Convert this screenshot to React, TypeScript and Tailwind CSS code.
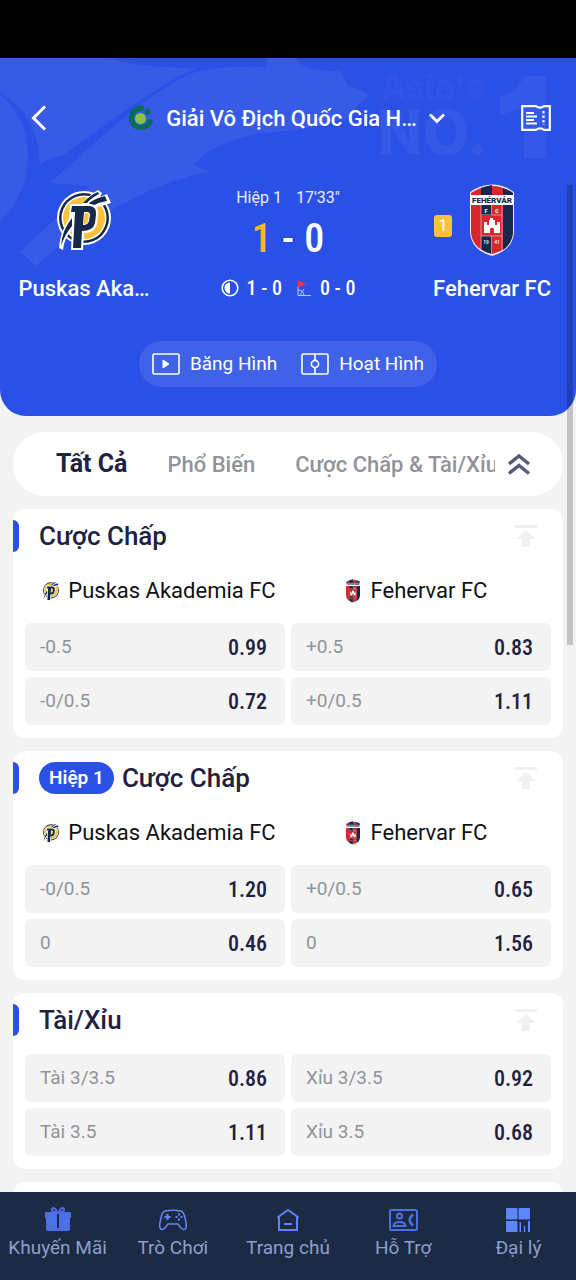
import React from "react";

const NUM = "font-['Roboto_Condensed','Liberation_Sans_Narrow',sans-serif]";

function PuskasLogo({ className }: { className: string }) {
  return (
    <svg viewBox="0 0 56 60" className={className} aria-hidden="true">
      <circle cx="28" cy="28" r="27" fill="#fff" />
      <circle cx="28" cy="28" r="25" fill="#16294b" />
      <circle cx="28" cy="28" r="22.500" fill="#fff" />
      <circle cx="28" cy="28" r="21" fill="#fdc13c" />
      <path d="M24 17 Q32 5 42 0 L46 3 L44 7 L51 4 L55 13 L36 19 Z" fill="#fff" />
      <path d="M27 13 Q34 5 42 2 L43 4 Q35 8 31 13 Z M33 13 Q40 8 49 6 L51 11 Q43 12 36 16 Z" fill="#16294b" />
      <path d="M14 14 H35 Q43 15 42 25 L41 34 Q39 43 28 43 L27 60 H15 L16 40 Q8 48 7 60 L3 58 Q4 42 13 29 Z" fill="#fff" />
      <path d="M16 16 H34 Q41 17 40 25 L39 33 Q37 41 26 41 L25 58 H17 L19 22 H15 Z M28 22 L27 35 Q32 35 33 31 L34 25 Q34 22 31 22 Z" fill="#16294b" fillRule="evenodd" />
      <path d="M28.500 23 L27.500 34 Q31.500 34 32 31 L33 25 Q33 23 31 23 Z" fill="#fdc13c" />
      <path d="M16 28 Q6 40 5 56 Q9 44 16 36 Z" fill="#16294b" />
    </svg>
  );
}

function FehervarLogo({ className }: { className: string }) {
  return (
    <svg viewBox="0 0 44 72" className={className} aria-hidden="true">
      <path d="M0 8 Q22 -7 44 8 V48 Q43 66 22 72 Q1 66 0 48 Z" fill="#f4eef2" />
      <path d="M1 9 Q22 -5 43 9 V48 Q42 65 22 70 Q2 65 1 48 Z" fill="#d9272e" />
      <path d="M11 4 Q16 2 22 1 V70 Q16 69 11 65 Z M33 4 Q39 6 43 9 V48 Q42 60 33 66 Z" fill="#16294b" />
      <path d="M0 11 H44 V21 H0 Z" fill="#fff" />
      <path d="M11 32 H32 V52 H11 Z" fill="#d9272e" />
      <path d="M11 21 V66 M32 21 V66 M11 31 H32 M11 52 H32 M21.500 21 V31 M21.500 52 V70" stroke="#e9b9c4" strokeWidth=".7" fill="none" />
      <path d="M14 49 V38 H17 V41 H19 V36 H20 V34 H23 V36 H25 V41 H27 V38 H30 V49 H24 V45 Q22 42 20 45 V49 Z" fill="#fff" />
      <text x="22" y="18.800" fontSize="8" fontWeight="900" textAnchor="middle" fill="#16294b" fontFamily="Roboto, sans-serif">FEHÉRVÁR</text>
      <text x="16" y="28.500" fontSize="5" fontWeight="900" textAnchor="middle" fill="#fff" fontFamily="Roboto, sans-serif">F</text>
      <text x="27" y="28.500" fontSize="5" fontWeight="900" textAnchor="middle" fill="#fff" fontFamily="Roboto, sans-serif">C</text>
      <text x="16" y="60" fontSize="5" textAnchor="middle" fill="#fff" fontFamily="Roboto, sans-serif">19</text>
      <text x="27" y="60" fontSize="5" textAnchor="middle" fill="#fff" fontFamily="Roboto, sans-serif">41</text>
    </svg>
  );
}

function HeaderArt() {
  return (
    <svg viewBox="0 0 576 358" preserveAspectRatio="xMidYMin slice" className="absolute inset-0 h-full w-full" aria-hidden="true">
      <g fill="#fff" fillOpacity=".065">
        <path d="M0 0 H107 C130 7 165 10 197 10 C150 30 110 65 62 98 Q48 99 40 107 Q38 55 0 35 Z" />
        <path d="M0 36 Q28 60 28 98 Q26 140 0 163 Z" />
        <path d="M267 0 H296 C300 10 315 13 340 13 Q345 20 348 28 Q365 32 368 38 Q355 48 352 58 Q320 70 286 73 C250 75 210 85 194 107 L210 114 C170 120 130 140 85 168 Q60 185 36 208 L20 194 L90 128 L50 125 C90 90 140 40 190 16 Q215 7 267 9 Z" />
      </g>
      <g fill="#fff" fillOpacity=".05" fontFamily="Inter, sans-serif" fontWeight="800">
        <text x="380" y="41" fontSize="34">Asia's</text>
        <text x="377" y="96" fontSize="60">NO.</text>
        <path d="M525 18 H546 V100 H524 V49 L500 57 V39 Q516 34 525 18 Z" />
      </g>
    </svg>
  );
}

function LeagueIcon() {
  return (
    <svg viewBox="0 0 26 26" className="h-[26px] w-[26px] shrink-0" aria-hidden="true">
      <path d="M15.500 3.500 A9.700 9.700 0 1 0 22.500 14.500" fill="none" stroke="#096b5b" strokeWidth="5" />
      <circle cx="19.500" cy="6.500" r="3" fill="#096b5b" />
      <circle cx="12.500" cy="13.500" r="5.500" fill="#85c440" />
    </svg>
  );
}

function Teams() {
  return (
    <div className="grid h-[53px] grid-cols-2 gap-1.5 px-3 pt-0.5 text-[22px] text-[#111]">
      <div className="flex items-center justify-center gap-2 pl-2 whitespace-nowrap">
        <PuskasLogo className="h-5 w-[18px] shrink-0" />
        Puskas Akademia FC
      </div>
      <div className="flex items-center justify-center gap-2.5 pr-2.5 whitespace-nowrap">
        <FehervarLogo className="h-6 w-4 shrink-0" />
        Fehervar FC
      </div>
    </div>
  );
}

function Market({ title, badge, teams, odds }: { title: string; badge?: string; teams?: boolean; odds: [string, string][] }) {
  return (
    <section className="shrink-0 rounded-xl bg-white pb-[13px]">
      <div className="flex h-[54px] items-center pr-6">
        <span className="h-8 w-1.5 rounded-r-md bg-[#2a50e6]" />
        {badge && <span className="ml-5 flex h-8 items-center rounded-full bg-[#2a50e6] px-2.5 text-[19px] font-semibold text-white">{badge}</span>}
        <h2 className={(badge ? "ml-2" : "ml-5") + " flex-1 text-[26px] font-medium text-[#1f2140]"}>{title}</h2>
        <button aria-label="Ghim lên đầu" className="text-[#f0f0f0]">
          <svg viewBox="0 0 26 26" className="h-[26px] w-[26px]" fill="currentColor">
            <path d="M2 2 H24 V5 H2 Z M13 7 L23 16 H17 V24 H9 V16 H3 Z" />
          </svg>
        </button>
      </div>
      {teams && <Teams />}
      <div className="grid grid-cols-2 gap-1.5 px-3 pt-[7px]">
        {odds.map(([name, value]) => (
          <button key={name + value} className="flex h-12 items-center justify-between rounded-md bg-[#f3f3f3] pr-[18px] pl-[15px]">
            <span className="text-[19px] text-[#909399]">{name}</span>
            <span className={NUM + " text-[22px] font-medium text-[#1f2140]"}>{value}</span>
          </button>
        ))}
      </div>
    </section>
  );
}

const NAV: { label: string; icon: React.ReactNode }[] = [
  {
    label: "Khuyến Mãi",
    icon: (
      <g fill="#4c6fe6">
        <path d="M3 6 H27 Q28 6 28 7 V12 H2 V7 Q2 6 3 6 Z M3 11 H27 V23 Q27 25 25 25 H5 Q3 25 3 23 Z" />
        <path d="M14 6 Q8 6 9 3 Q12 0 14 6 M16 6 Q18 0 21 3 Q22 6 16 6" fill="none" stroke="#4c6fe6" strokeWidth="2" />
        <path d="M14 8 H16 V22 H14 Z" fill="#1d2a44" />
      </g>
    ),
  },
  {
    label: "Trò Chơi",
    icon: (
      <g fill="none" stroke="#6488f5" strokeWidth="1.500">
        <path d="M7 5 Q15 3.500 23 5 Q26 6 27 12 Q29 19 28 22 Q26 25 23 22 L20 18 H10 L7 22 Q4 25 2 22 Q1 19 3 12 Q4 6 7 5 Z" />
        <path d="M9.500 8 V14 M6.500 11 H12.500" strokeWidth="2" />
        <path d="M21 7.500 V9.500 M21 12.500 V14.500 M17.500 11 H19.500 M22.500 11 H24.500" strokeWidth="2" />
      </g>
    ),
  },
  {
    label: "Trang chủ",
    icon: <path d="M6 24 V11 L4.500 11.500 L15 4 L25.500 11.500 L24 11 V24 H6 Z M11 18 H19" fill="none" stroke="#5f82fa" strokeWidth="2" />,
  },
  {
    label: "Hỗ Trợ",
    icon: (
      <g fill="none" stroke="#4d70e6" strokeWidth="2">
        <rect x="2" y="4" width="27" height="20" rx="1.500" />
        <circle cx="11.500" cy="10" r="2.600" />
        <path d="M5.500 20 Q6 16 11.500 16 Q17 16 17.500 20 Z" />
        <path d="M25 8.500 Q18.500 14 25 19.500" strokeWidth="2.500" />
      </g>
    ),
  },
  {
    label: "Đại lý",
    icon: (
      <g fill="#5f86ff">
        <rect x="3" y="2" width="11.500" height="11.500" rx="1" />
        <rect x="15.500" y="2" width="11.500" height="11.500" rx="1" />
        <rect x="3" y="15" width="11.500" height="11" rx="1" />
        <path d="M16.500 16 H18 V26 H16.500 Z M20.800 20 H22.200 V26 H20.800 Z M25 15 H27 V26 H25 Z" />
      </g>
    ),
  },
];

export default function App() {
  return (
    <div className="relative flex h-screen flex-col overflow-hidden bg-[#f3f3f3] font-['Roboto',sans-serif]">
      <div className="h-[58px] shrink-0 bg-black" />

      <header className="relative shrink-0 overflow-hidden rounded-b-[26px] bg-[#2a50e6] pb-[29px] text-white">
        <HeaderArt />
        <div className="relative flex h-[120px] items-center justify-between pr-[25px] pl-7">
          <button aria-label="Quay lại">
            <svg viewBox="0 0 24 28" className="h-7 w-6" fill="none" stroke="#fff" strokeWidth="3">
              <path d="M17 2.500 L5.500 14 L17 25.500" />
            </svg>
          </button>
          <button className="flex items-center gap-3 text-[22px] font-medium whitespace-nowrap">
            <LeagueIcon />
            <span>Giải Vô Địch Quốc Gia H…</span>
            <svg viewBox="0 0 16 12" className="h-3 w-4" fill="none" stroke="#fff" strokeWidth="2.800">
              <path d="M1 2.500 L8 9.500 L15 2.500" />
            </svg>
          </button>
          <button aria-label="Phiếu cược">
            <svg viewBox="0 0 30 26" className="h-[26px] w-[30px]" fill="none" stroke="#fff" strokeWidth="2.200">
              <path d="M1.200 1.200 H15 Q19 4 23 1.200 H28.800 V24.800 H23 Q19 22 15 24.800 H1.200 Z" />
              <path d="M5 8 H13 M5 11.500 H16 M5 15 H13 M5 18.500 H16" strokeWidth="2" />
              <path d="M22.500 6 V20" strokeDasharray="2.500 2" />
            </svg>
          </button>
        </div>

        <div className="relative grid grid-cols-3 items-start">
          <div className="-mr-6 flex flex-col items-center pr-12 text-[22px] font-medium">
            <div className="flex h-[84px] items-center">
              <PuskasLogo className="h-[60px] w-14" />
            </div>
            <div className="mt-2.5 flex h-8 items-center whitespace-nowrap">Puskas Aka…</div>
          </div>
          <div className="flex flex-col items-center">
            <div className="flex h-9 items-center gap-3.5 pt-1 text-[16px] whitespace-nowrap text-white/90">
              <span>Hiệp 1</span>
              <span>17'33"</span>
            </div>
            <div className={NUM + " flex h-12 items-center gap-2.5 pt-0.5 text-[40px] font-medium"}>
              <span className="text-[#fcb81e]">1</span>
              <span>-</span>
              <span>0</span>
            </div>
            <div className={NUM + " mt-2.5 flex h-8 items-center text-[20px] font-medium whitespace-nowrap"}>
              <svg viewBox="0 0 18 18" className="mr-2 h-[18px] w-[18px]" aria-hidden="true">
                <circle cx="9" cy="9" r="7.800" fill="none" stroke="#fff" strokeWidth="1.600" />
                <path d="M9 3.500 V14.500 A5.500 5.500 0 0 1 9 3.500 Z" fill="#fff" />
              </svg>
              <span>1 - 0</span>
              <svg viewBox="0 0 16 18" className="mr-2 ml-3.5 h-[18px] w-4" aria-hidden="true">
                <path d="M1.500 1 L10 5 L1.500 9 Z" fill="#f2304b" />
                <path d="M2 8 V16.500 H15 M2 11 Q7 11 8 16 M4 16 L8 10" fill="none" stroke="#b9c8ff" strokeWidth="1" />
              </svg>
              <span>0 - 0</span>
            </div>
          </div>
          <div className="-ml-6 flex flex-col items-center pl-12 text-[22px] font-medium">
            <div className="relative flex h-[84px] items-center">
              <span className="absolute right-full mr-[18px] mt-3 flex h-[22px] w-[18px] items-center justify-center rounded-[3px] bg-[#fdc13c] text-base font-normal">1</span>
              <FehervarLogo className="h-[72px] w-11" />
            </div>
            <div className="mt-2.5 flex h-8 items-center whitespace-nowrap">Fehervar FC</div>
          </div>
        </div>

        <div className="relative mx-auto mt-[37px] flex h-[46px] w-fit items-center gap-6 rounded-full bg-white/10 px-[13px] text-[19px] whitespace-nowrap">
          <button className="flex items-center gap-2.5">
            <svg viewBox="0 0 28 22" className="h-[22px] w-7" fill="none" stroke="#fff" strokeWidth="1.600">
              <rect x="1" y="1" width="26" height="20" rx="1.500" />
              <path d="M11 7 L17 11 L11 15 Z" fill="#fff" strokeWidth="1" />
            </svg>
            Băng Hình
          </button>
          <button className="flex items-center gap-2.5">
            <svg viewBox="0 0 28 22" className="h-[22px] w-7" fill="none" stroke="#fff" strokeWidth="1.600">
              <rect x="1" y="1" width="26" height="20" rx="1.500" />
              <path d="M14 1 V7 M14 15 V21" />
              <circle cx="14" cy="11" r="3.600" />
            </svg>
            Hoạt Hình
          </button>
        </div>
      </header>

      <main className="flex min-h-0 flex-1 flex-col gap-[13px] overflow-y-auto px-[13px] pt-4 [scrollbar-width:none]">
        <div className="flex h-16 shrink-0 items-center rounded-full bg-white pr-8 pl-[43px]">
          <nav className="flex min-w-0 flex-1 items-center gap-10 overflow-hidden text-[22px] font-medium whitespace-nowrap text-[#909399]">
            <button className="text-[25px] font-bold text-[#1f2140]">Tất Cả</button>
            <button>Phổ Biến</button>
            <button>Cược Chấp &amp; Tài/Xỉu</button>
          </nav>
          <button aria-label="Thu gọn" className="ml-3">
            <svg viewBox="0 0 24 24" className="h-6 w-6" fill="none" stroke="#565b76" strokeWidth="3.400">
              <path d="M2 12 L12 4 L22 12 M2 21.500 L12 13.500 L22 21.500" />
            </svg>
          </button>
        </div>

        <Market title="Cược Chấp" teams odds={[["-0.5", "0.99"], ["+0.5", "0.83"], ["-0/0.5", "0.72"], ["+0/0.5", "1.11"]]} />
        <Market title="Cược Chấp" badge="Hiệp 1" teams odds={[["-0/0.5", "1.20"], ["+0/0.5", "0.65"], ["0", "0.46"], ["0", "1.56"]]} />
        <Market title="Tài/Xỉu" odds={[["Tài 3/3.5", "0.86"], ["Xỉu 3/3.5", "0.92"], ["Tài 3.5", "1.11"], ["Xỉu 3.5", "0.68"]]} />
        <section className="h-14 shrink-0 rounded-xl bg-white" />
      </main>

      <nav className="grid h-[88px] shrink-0 grid-cols-5 bg-[#1d2a44] text-[19px] text-[#8d9fcb]">
        {NAV.map(({ label, icon }) => (
          <a key={label} href="#" className="flex flex-col items-center pt-3.5 whitespace-nowrap">
            <svg viewBox="0 0 30 28" className="h-7 w-[30px]" aria-hidden="true">{icon}</svg>
            <span>{label}</span>
          </a>
        ))}
      </nav>

      <div className="pointer-events-none absolute top-[185px] right-[3px] h-[460px] w-1.5 bg-black/20" />
    </div>
  );
}
